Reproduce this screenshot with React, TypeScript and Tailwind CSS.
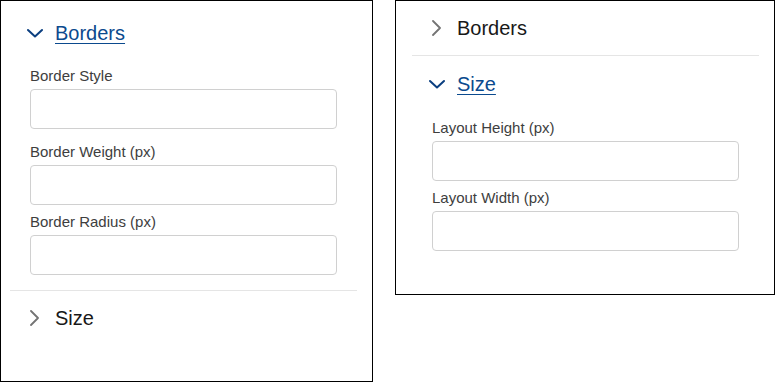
import React from 'react';

const ChevronDown = () => (
  <svg width="16" height="16" viewBox="0 0 16 16" fill="none">
    <polyline points="1,5 8,11.5 15,5" stroke="#0b3f80" strokeWidth="2" strokeLinecap="round" strokeLinejoin="round" />
  </svg>
);

const ChevronRight = () => (
  <svg width="16" height="16" viewBox="0 0 16 16" fill="none">
    <polyline points="4,1 11,8 4,15" stroke="#747474" strokeWidth="1.8" strokeLinecap="round" strokeLinejoin="round" />
  </svg>
);

const Header = ({ title, open }: { title: string; open: boolean }) => (
  <div className="flex items-center gap-3 pl-[17px] h-6">
    {open ? <ChevronDown /> : <ChevronRight />}
    {open ? (
      <span className="text-[20px] leading-6 text-[#0b4a8e] underline underline-offset-[3px] decoration-1">{title}</span>
    ) : (
      <span className="text-[20px] leading-6 text-[#181818]">{title}</span>
    )}
  </div>
);

const Field = ({ label, className }: { label: string; className?: string }) => (
  <div className={className}>
    <div className="text-[15px] leading-5 text-[#3e3e3e]">{label}</div>
    <div className="mt-[3px] h-10 w-[307px] rounded-[4px] border border-[#d0d0d0] bg-white" />
  </div>
);

const Divider = ({ className }: { className?: string }) => <div className={`h-px w-[347px] bg-[#e5e5e5] ${className ?? ''}`} />;

export default function App() {
  return (
    <div className="flex items-start gap-[22px] bg-white" style={{ fontFamily: '"Liberation Sans", Arial, sans-serif' }}>
      <div className="w-[373px] h-[382px] border border-black pl-[9px] pt-5">
        <Header title="Borders" open />
        <div className="pl-5">
          <Field label="Border Style" className="mt-[21px]" />
          <Field label="Border Weight (px)" className="mt-[13px]" />
          <Field label="Border Radius (px)" className="mt-[7px]" />
        </div>
        <Divider className="mt-[15px]" />
        <div className="mt-[15px]">
          <Header title="Size" open={false} />
        </div>
      </div>
      <div className="w-[380px] h-[295px] border border-black pl-4 pt-[15px]">
        <Header title="Borders" open={false} />
        <Divider className="mt-[15px]" />
        <div className="mt-4">
          <Header title="Size" open />
        </div>
        <div className="pl-5">
          <Field label="Layout Height (px)" className="mt-[22px]" />
          <Field label="Layout Width (px)" className="mt-[7px]" />
        </div>
      </div>
    </div>
  );
}
